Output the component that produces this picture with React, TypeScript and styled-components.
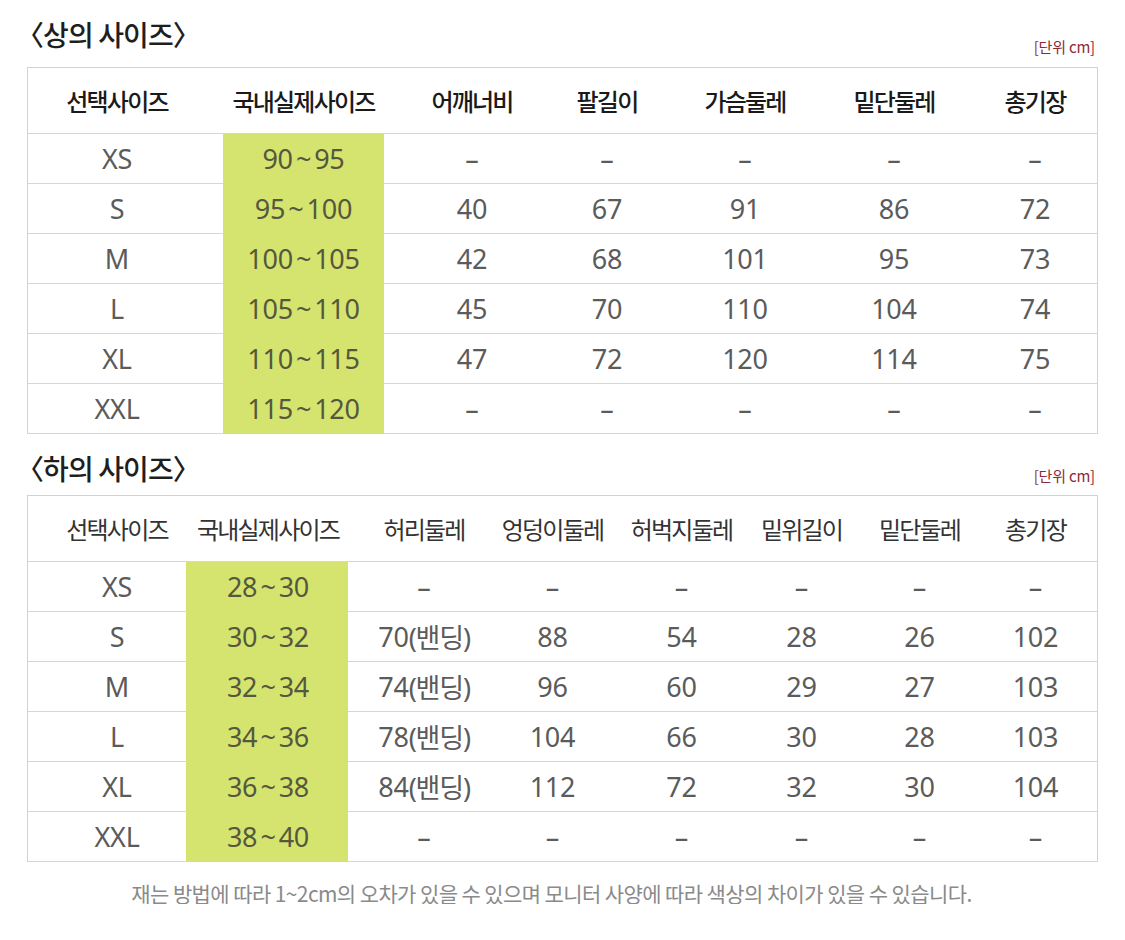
import React from "react";
import styled, { createGlobalStyle } from "styled-components";

const Global = createGlobalStyle`
  html, body { margin: 0; padding: 0; background: #fff; }
  body { font-family: "Noto Sans", "Noto Sans CJK KR", sans-serif; }
`;

const Page = styled.div`
  width: 1071px;
  padding: 0 0 0 27px;
  display: flex;
  flex-direction: column;
`;

const SectionHead = styled.div<{ $h: number; $pb: number }>`
  height: ${(p) => p.$h}px;
  display: flex;
  align-items: flex-end;
  justify-content: space-between;
  box-sizing: border-box;
  padding-bottom: ${(p) => p.$pb}px;
`;

const Title = styled.h2<{ $lift: number }>`
  margin: 0 0 ${(p) => p.$lift}px -11px;
  font-family: "Noto Sans CJK KR", sans-serif;
  font-size: 28px;
  font-weight: 500;
  letter-spacing: -0.9px;
  color: #1e1e1e;
  line-height: 34px;
`;

const Unit = styled.span`
  font-family: "Noto Sans CJK KR", sans-serif;
  font-size: 15px;
  letter-spacing: -0.2px;
  color: #8a2a37;
  line-height: 18px;
  margin-right: 3px;
`;

const Table = styled.div`
  border: 1px solid #d2d2d2;
  border-bottom: none;
  display: flex;
  flex-direction: column;
`;

const Row = styled.div<{ $cols: string; $h: number }>`
  display: grid;
  grid-template-columns: ${(p) => p.$cols};
  height: ${(p) => p.$h}px;
`;

const Cell = styled.div<{ $green?: boolean; $head?: boolean; $shift?: number; $dark?: string; $weight?: number }>`
  display: flex;
  align-items: center;
  justify-content: center;
  box-sizing: border-box;
  border-bottom: 1px solid ${(p) => (p.$green ? "#d4e46e" : "#d6d6d6")};
  background: ${(p) => (p.$green ? "#d4e46e" : "#fff")};
  padding-left: ${(p) => Math.max(0, p.$shift ?? 0)}px;
  padding-right: ${(p) => Math.max(0, -(p.$shift ?? 0))}px;
  white-space: nowrap;
  ${(p) =>
    p.$head
      ? `
    font-family: "Noto Sans CJK KR", sans-serif;
    font-size: 24px;
    letter-spacing: -1.8px;
    color: ${p.$dark ?? "#222"};
    font-weight: ${p.$weight ?? 500};
    background: #fff;
    border-bottom-color: #d6d6d6;
  `
      : `
    font-family: "Noto Sans", "Noto Sans CJK KR", sans-serif;
    font-size: 27px;
    color: ${p.$green ? "#56573f" : "#5b5b5b"};
    letter-spacing: -0.2px;
  `}
`;

const Small = styled.span`
  font-family: "Noto Sans", "Noto Sans CJK KR", sans-serif;
  letter-spacing: -1.2px;
`;

const Tilde = styled.span`
  margin: 0 3px;
`;

const Note = styled.p`
  margin: 20px 0 0 0;
  padding-right: 22px;
  text-align: center;
  font-family: "Noto Sans CJK KR", sans-serif;
  font-size: 21px;
  letter-spacing: -0.6px;
  color: #8a8a8a;
  line-height: 22px;
`;

type Spec = {
  title: string;
  cols: number[];
  shifts: number[];
  headers: string[];
  headColor: string;
  headWeight: number;
  rows: string[][];
};

const top: Spec = {
  title: "〈상의 사이즈〉",
  cols: [195, 161, 155, 136, 144, 146, 134],
  shifts: [-17, 0, 21, 0, -4, 4, 8],
  headers: ["선택사이즈", "국내실제사이즈", "어깨너비", "팔길이", "가슴둘레", "밑단둘레", "총기장"],
  headColor: "#1a1a1a",
  headWeight: 500,
  rows: [
    ["XS", "90~95", "–", "–", "–", "–", "–"],
    ["S", "95~100", "40", "67", "91", "86", "72"],
    ["M", "100~105", "42", "68", "101", "95", "73"],
    ["L", "105~110", "45", "70", "110", "104", "74"],
    ["XL", "110~115", "47", "72", "120", "114", "75"],
    ["XXL", "115~120", "–", "–", "–", "–", "–"],
  ],
};

const bottom: Spec = {
  title: "〈하의 사이즈〉",
  cols: [158, 162, 140, 129, 125, 119, 117, 121],
  shifts: [20, 2, 12, 0, 4, 0, 0, -4],
  headers: ["선택사이즈", "국내실제사이즈", "허리둘레", "엉덩이둘레", "허벅지둘레", "밑위길이", "밑단둘레", "총기장"],
  headColor: "#333",
  headWeight: 400,
  rows: [
    ["XS", "28~30", "–", "–", "–", "–", "–", "–"],
    ["S", "30~32", "70(밴딩)", "88", "54", "28", "26", "102"],
    ["M", "32~34", "74(밴딩)", "96", "60", "29", "27", "103"],
    ["L", "34~36", "78(밴딩)", "104", "66", "30", "28", "103"],
    ["XL", "36~38", "84(밴딩)", "112", "72", "32", "30", "104"],
    ["XXL", "38~40", "–", "–", "–", "–", "–", "–"],
  ],
};

const renderValue = (v: string) => {
  const m = v.match(/^(\d+)\((.+)\)$/);
  if (m) {
    return (
      <>
        {m[1]}
        <Small>({m[2]})</Small>
      </>
    );
  }
  const t = v.split("~");
  if (t.length === 2) {
    return (
      <>
        {t[0]}
        <Tilde>~</Tilde>
        {t[1]}
      </>
    );
  }
  return v;
};

function SizeTable({ spec }: { spec: Spec }) {
  const cols = spec.cols.map((c, i) => (i === spec.cols.length - 1 ? "1fr" : `${c}px`)).join(" ");
  return (
    <Table>
      <Row $cols={cols} $h={66}>
        {spec.headers.map((h, i) => (
          <Cell key={h} $head $shift={spec.shifts[i]} $dark={spec.headColor} $weight={spec.headWeight}>
            {h}
          </Cell>
        ))}
      </Row>
      {spec.rows.map((r, ri) => (
        <Row key={ri} $cols={cols} $h={50}>
          {r.map((v, i) => (
            <Cell key={i} $green={i === 1} $shift={spec.shifts[i]}>
              {renderValue(v)}
            </Cell>
          ))}
        </Row>
      ))}
    </Table>
  );
}

export default function App() {
  return (
    <>
      <Global />
      <Page>
        <SectionHead $h={67} $pb={11}>
          <Title $lift={5}>{top.title}</Title>
          <Unit>[단위 cm]</Unit>
        </SectionHead>
        <SizeTable spec={top} />
        <SectionHead $h={61} $pb={10}>
          <Title $lift={0}>{bottom.title}</Title>
          <Unit>[단위 cm]</Unit>
        </SectionHead>
        <SizeTable spec={bottom} />
        <Note>재는 방법에 따라 1~2cm의 오차가 있을 수 있으며 모니터 사양에 따라 색상의 차이가 있을 수 있습니다.</Note>
      </Page>
    </>
  );
}
